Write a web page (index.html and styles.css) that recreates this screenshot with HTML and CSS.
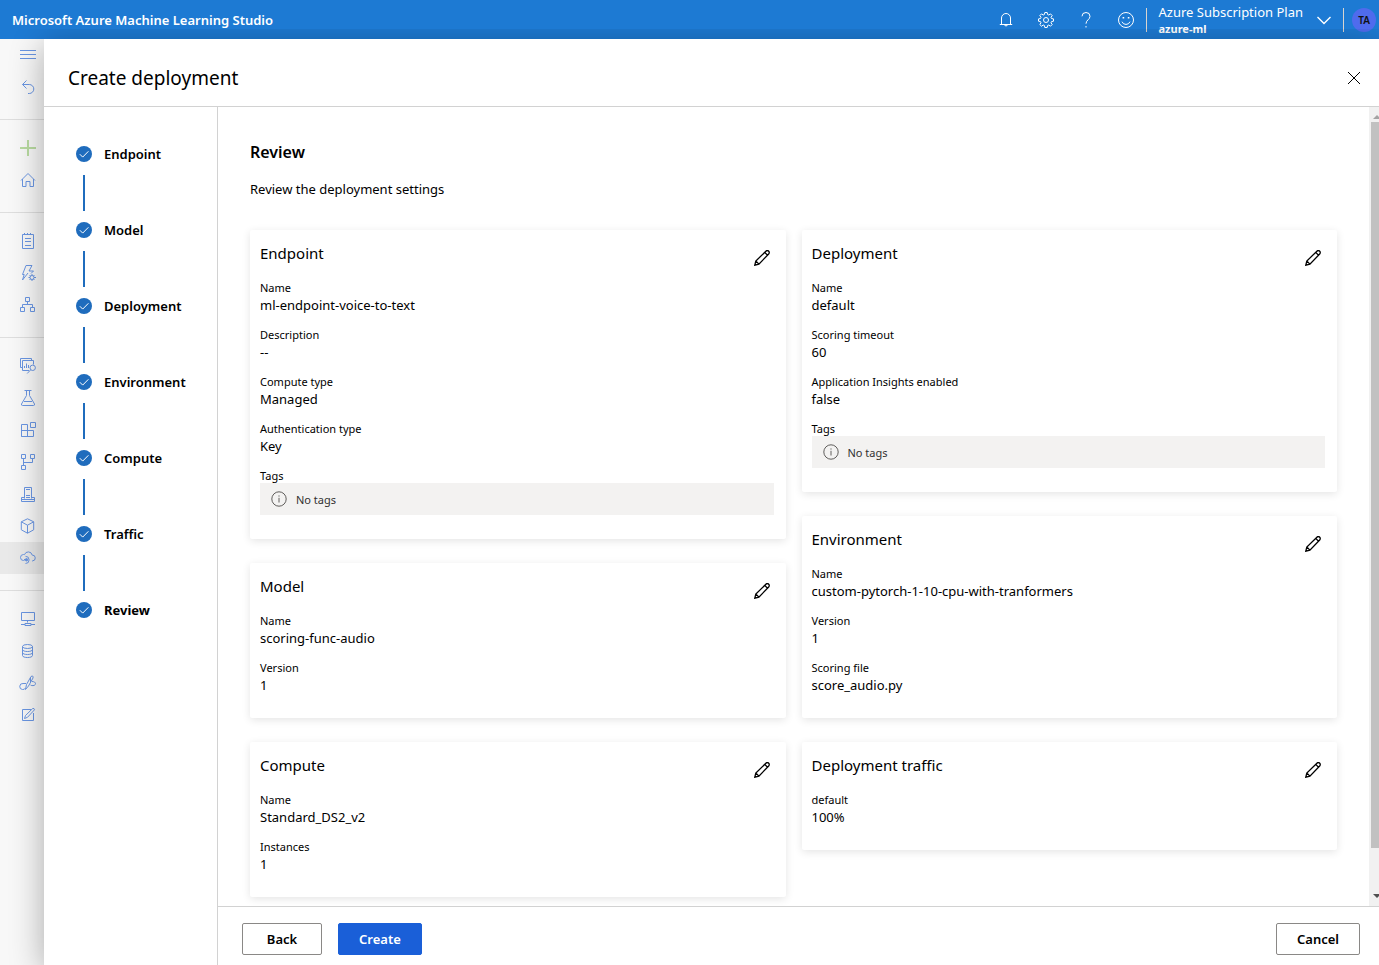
FILE: index.html
```html
<!DOCTYPE html>
<html lang="en">
<head>
    <meta charset="UTF-8">
    <meta name="viewport" content="width=device-width, initial-scale=1.0">
    <title>Create deployment</title>
    <link rel="stylesheet" href="styles.css">
</head>
<body>
    <!-- shared icons -->
    <svg class="sprite" aria-hidden="true">
        <symbol id="pencil" viewBox="0 0 16 16">
            <path d="M.8 15.2l1-4.2L11.9 1.2a1.9 1.9 0 0 1 2.8 2.8L4.900 14.100zM1.800 11l3.100 3.100M10.700 2.400l2.900 2.900"/>
        </symbol>
        <symbol id="info" viewBox="0 0 16 16">
            <circle cx="8" cy="8" r="7.200"/>
            <path d="M8 6.800v4.700M8 4.400v1.200"/>
        </symbol>
        <symbol id="check" viewBox="0 0 16 16">
            <circle cx="8" cy="8" r="8" fill="#1f6cbd"/>
            <path d="M3.800 8.200l2.900 2.900 5.700-5.800" fill="none" stroke="#fff"/>
        </symbol>
    </svg>

    <header class="topbar">
        <span class="brand">Microsoft Azure Machine Learning Studio</span>
        <div class="tools">
            <button class="tool" aria-label="Notifications">
                <svg viewBox="0 0 16 16"><path d="M3.500 12.500V6a4.500 4.500 0 0 1 9 0v6.500M1.800 12.500h12.400M6.300 12.700a1.800 1.800 0 0 0 3.400 0"/></svg>
            </button>
            <button class="tool" aria-label="Settings">
                <svg viewBox="0 0 16 16"><path d="M6.800.500h2.400l.4 2 1.200.5 1.700-1.100 1.700 1.700L13 5.300l.5 1.200 2 .4v2.300l-2 .4-.5 1.200 1.200 1.700-1.700 1.700-1.700-1.200-1.200.5-.4 2H6.800l-.4-2-1.200-.5-1.700 1.200-1.700-1.700L3 10.800l-.5-1.200-2-.4V6.900l2-.4L3 5.300 1.800 3.600l1.700-1.700L5.200 3l1.200-.5z"/><circle cx="8" cy="8" r="2.500"/></svg>
            </button>
            <button class="tool" aria-label="Help">
                <svg viewBox="0 0 16 16"><path d="M4 4.300a4 3.800 0 0 1 8 0c0 3.300-4 3.700-4 7.400M8 14v1.500"/></svg>
            </button>
            <button class="tool" aria-label="Feedback">
                <svg viewBox="0 0 16 16"><circle cx="8" cy="8" r="7.500"/><path d="M4 9.700a4.300 4.300 0 0 0 8 0"/><path d="M5.400 5v1.600M10.600 5v1.600" stroke-width="1.600"/></svg>
            </button>
        </div>
        <button class="account">
            <span class="account-text">
                <span class="plan">Azure Subscription Plan</span>
                <strong class="workspace">azure-ml</strong>
            </span>
            <svg class="chevron" viewBox="0 0 14 14"><path d="M.500 4l6.500 6.500L13.500 4"/></svg>
        </button>
        <button class="avatar">TA</button>
    </header>

    <div class="shell">
        <nav class="rail" aria-label="Studio">
            <button class="rail-item" aria-label="Menu"><svg viewBox="0 0 16 16"><path d="M0 3.500h16M0 7.500h16M0 11.500h16"/></svg></button>
            <a class="rail-item" href="#" aria-label="Back"><svg viewBox="0 0 16 16"><path d="M6.500 1.500l-4 4 4 4M2.500 5.500h6.800a4.500 4.500 0 0 1 0 9H8"/></svg></a>
            <hr>
            <a class="rail-item new" href="#" aria-label="New"><svg viewBox="0 0 16 16"><path d="M0 8h16M8 0v16"/></svg></a>
            <a class="rail-item" href="#" aria-label="Home"><svg viewBox="0 0 16 16"><path d="M1 8.500l7-7 7 7M2.500 7v7.500h3.500v-5h4v5h3.500V7"/></svg></a>
            <hr>
            <a class="rail-item" href="#" aria-label="Notebooks"><svg viewBox="0 0 16 16"><path d="M2.500 1.500h11v14h-11zM4.500 0v1.500M7.500 0v1.500M10.500 0v1.500M5 5.500h6M5 8.500h6M5 12.500h6"/></svg></a>
            <a class="rail-item" href="#" aria-label="Automated ML"><svg viewBox="0 0 16 16"><path d="M8 8L2.500 15l1.700-5.500H2.500L6 .500h6L9 6h4.500L11 8.500"/><circle cx="12" cy="12.500" r="2"/><path d="M12 9v1.500M12 14.500V16M8.500 12.500H10M14 12.500h2M9.500 10l1 1M13.500 14l1 1M14.500 10l-1 1M10.500 14l-1 1"/></svg></a>
            <a class="rail-item" href="#" aria-label="Designer"><svg viewBox="0 0 16 16"><path d="M5.500.500h4v4h-4zM.500 10.500h4v4h-4zM10.500 10.500h4v4h-4zM7.500 4.500v3M2.500 10.500v-3h10v3"/></svg></a>
            <hr>
            <a class="rail-item" href="#" aria-label="Data"><svg viewBox="0 0 16 16"><path d="M2 9.500H.500v-9h11V2M9 12.500H2.500v-10h11v4M4.500 10V8M6.500 10V5.500M8.500 10V7"/><circle cx="12.700" cy="9.800" r="2.700"/><path d="M10.700 11.800L7.200 15.500"/></svg></a>
            <a class="rail-item" href="#" aria-label="Jobs"><svg viewBox="0 0 16 16"><path d="M4.500.500h7M6.500.500v5L1.500 14q-.3 1.500 1 1.500h11q1.300 0 1-1.500l-5-8.500v-5M4 11.500h8"/></svg></a>
            <a class="rail-item" href="#" aria-label="Components"><svg viewBox="0 0 16 16"><path d="M1.500 2.500h6v12h-6zM1.500 8.500h12v6h-12M10.500.500h5v5h-5z"/></svg></a>
            <a class="rail-item" href="#" aria-label="Pipelines"><svg viewBox="0 0 16 16"><path d="M1.500.500h4v4h-4zM10.500.500h4v4h-4zM1.500 11.500h4v4h-4zM3.500 4.500v7M3.500 8.500h9v-4"/></svg></a>
            <a class="rail-item" href="#" aria-label="Environments"><svg viewBox="0 0 16 16"><path d="M4.500 12.500V1.500h7v11M1.500 11.500h3M11.500 11.500h3v4h-13v-4M1.500 13.500h13M6 3.500h4M6 9.500h4M6 11.500h4"/></svg></a>
            <a class="rail-item" href="#" aria-label="Models"><svg viewBox="0 0 16 16"><path d="M7.500.800l6.200 3v8l-6.200 3.400-6.200-3.400v-8zM1.300 3.800L7.500 7.200l6.200-3.400M7.500 7.200v8"/></svg></a>
            <a class="rail-item active" href="#" aria-label="Endpoints"><svg viewBox="0 0 16 16"><path d="M4.500 10.500h-1a3 3 0 0 1 0-6c.3 0 1 .1 1 .1a4 4 0 0 1 7.700.5 2.900 2.900 0 0 1 .3 5.800h-.5M4 9.500h2.500"/><circle cx="6.500" cy="9.800" r="1.200" fill="currentColor"/><path d="M5.500 6.300a3.600 3.600 0 1 1 0 7.200"/></svg></a>
            <hr>
            <a class="rail-item" href="#" aria-label="Compute"><svg viewBox="0 0 16 16"><path d="M1.500 1.500h13v8h-13zM7.500 9.500v2M1 13.500h4M11 13.500h4M5 12.500h6v2H5z"/></svg></a>
            <a class="rail-item" href="#" aria-label="Datastores"><svg viewBox="0 0 16 16"><ellipse cx="7.500" cy="3.500" rx="5" ry="2"/><path d="M2.500 3.500v9c0 2.700 10 2.700 10 0v-9M2.500 6.500c0 2.700 10 2.700 10 0M2.500 9.500c0 2.700 10 2.700 10 0"/></svg></a>
            <a class="rail-item" href="#" aria-label="Linked services"><svg viewBox="0 0 16 16"><path d="M5.500 14.500l1-5 4.500-8q2.500-1.500 2 1.500l-4.500 8zM6 8.500H3a2.800 2.800 0 0 0-.5 6q2 .3 3-1.500M12 6.500c4 0 4.500 3 2 4q-2.500.5-3.500-.5M10.500 3v4"/></svg></a>
            <a class="rail-item" href="#" aria-label="Data labeling"><svg viewBox="0 0 16 16"><path d="M11 2.500H2.500v11h11V6M4.500 11.500l1-3L12.700 1.500q1.700-.5 1.800 1.300L7.500 10.300z"/></svg></a>
        </nav>

        <section class="panel">
            <div class="panel-head">
                <h1>Create deployment</h1>
                <button class="close" aria-label="Close"><svg viewBox="0 0 12 12"><path d="M0 0l12 12M12 0L0 12"/></svg></button>
            </div>

            <div class="panel-body">
                <ol class="steps">
                    <li><svg><use href="#check"/></svg>Endpoint</li>
                    <li><svg><use href="#check"/></svg>Model</li>
                    <li><svg><use href="#check"/></svg>Deployment</li>
                    <li><svg><use href="#check"/></svg>Environment</li>
                    <li><svg><use href="#check"/></svg>Compute</li>
                    <li><svg><use href="#check"/></svg>Traffic</li>
                    <li class="current"><svg><use href="#check"/></svg>Review</li>
                </ol>

                <div class="main">
                    <div class="scroll-area">
                        <div class="review">
                            <h2>Review</h2>
                            <p class="intro">Review the deployment settings</p>

                            <div class="columns">
                                <div class="column">
                                    <article class="card">
                                        <div class="card-head">
                                            <h3>Endpoint</h3>
                                            <button class="edit" aria-label="Edit endpoint"><svg><use href="#pencil"/></svg></button>
                                        </div>
                                        <dl>
                                            <div><dt>Name</dt><dd>ml-endpoint-voice-to-text</dd></div>
                                            <div><dt>Description</dt><dd>--</dd></div>
                                            <div><dt>Compute type</dt><dd>Managed</dd></div>
                                            <div><dt>Authentication type</dt><dd>Key</dd></div>
                                            <div><dt>Tags</dt><dd class="no-tags"><svg><use href="#info"/></svg>No tags</dd></div>
                                        </dl>
                                    </article>
                                    <article class="card">
                                        <div class="card-head">
                                            <h3>Model</h3>
                                            <button class="edit" aria-label="Edit model"><svg><use href="#pencil"/></svg></button>
                                        </div>
                                        <dl>
                                            <div><dt>Name</dt><dd>scoring-func-audio</dd></div>
                                            <div><dt>Version</dt><dd>1</dd></div>
                                        </dl>
                                    </article>
                                    <article class="card">
                                        <div class="card-head">
                                            <h3>Compute</h3>
                                            <button class="edit" aria-label="Edit compute"><svg><use href="#pencil"/></svg></button>
                                        </div>
                                        <dl>
                                            <div><dt>Name</dt><dd>Standard_DS2_v2</dd></div>
                                            <div><dt>Instances</dt><dd>1</dd></div>
                                        </dl>
                                    </article>
                                </div>

                                <div class="column">
                                    <article class="card">
                                        <div class="card-head">
                                            <h3>Deployment</h3>
                                            <button class="edit" aria-label="Edit deployment"><svg><use href="#pencil"/></svg></button>
                                        </div>
                                        <dl>
                                            <div><dt>Name</dt><dd>default</dd></div>
                                            <div><dt>Scoring timeout</dt><dd>60</dd></div>
                                            <div><dt>Application Insights enabled</dt><dd>false</dd></div>
                                            <div><dt>Tags</dt><dd class="no-tags"><svg><use href="#info"/></svg>No tags</dd></div>
                                        </dl>
                                    </article>
                                    <article class="card">
                                        <div class="card-head">
                                            <h3>Environment</h3>
                                            <button class="edit" aria-label="Edit environment"><svg><use href="#pencil"/></svg></button>
                                        </div>
                                        <dl>
                                            <div><dt>Name</dt><dd>custom-pytorch-1-10-cpu-with-tranformers</dd></div>
                                            <div><dt>Version</dt><dd>1</dd></div>
                                            <div><dt>Scoring file</dt><dd>score_audio.py</dd></div>
                                        </dl>
                                    </article>
                                    <article class="card">
                                        <div class="card-head">
                                            <h3>Deployment traffic</h3>
                                            <button class="edit" aria-label="Edit traffic"><svg><use href="#pencil"/></svg></button>
                                        </div>
                                        <dl>
                                            <div><dt>default</dt><dd>100%</dd></div>
                                        </dl>
                                    </article>
                                </div>
                            </div>
                        </div>
                        <div class="scrollbar" aria-hidden="true">
                            <span class="arrow up"></span>
                            <span class="thumb"></span>
                            <span class="arrow down"></span>
                        </div>
                    </div>

                    <div class="actions">
                        <button class="btn">Back</button>
                        <button class="btn primary">Create</button>
                        <button class="btn cancel">Cancel</button>
                    </div>
                </div>
            </div>
        </section>
    </div>
</body>
</html>
```
FILE: styles.css
```css
*, *::before, *::after {
    box-sizing: border-box;
}

body {
    display: flex;
    flex-direction: column;
    height: 100vh;
    margin: 0;
    overflow: hidden;
    background: #fff;
    color: #000;
    font: 13px/18px "Noto Sans", "Open Sans", sans-serif;
}

h1, h2, h3, p, ol, dl, dd {
    margin: 0;
    padding: 0;
}

button {
    padding: 0;
    border: 0;
    background: none;
    color: inherit;
    font: inherit;
    cursor: pointer;
}

svg {
    display: block;
    flex: none;
    width: 16px;
    height: 16px;
    fill: none;
    stroke: currentColor;
    overflow: visible;
}

.sprite {
    position: absolute;
    width: 0;
    height: 0;
}

/* top bar */
.topbar {
    display: flex;
    align-items: center;
    flex: none;
    height: 39px;
    padding: 0 3px 0 12px;
    background: #1d7ad3;
    color: #fff;
}

.brand {
    flex: 1;
    font-weight: 600;
    line-height: 20px;
}

.tools {
    display: flex;
    gap: 8px;
    padding-right: 4px;
}

.tool {
    display: grid;
    place-items: center;
    width: 32px;
    height: 32px;
}

.account {
    display: flex;
    align-items: center;
    gap: 14px;
    height: 24px;
    padding: 0 12px;
    border: solid #d8d4cf;
    border-width: 0 1px;
    text-align: left;
}

.account-text {
    display: flex;
    flex-direction: column;
}

.plan {
    font-size: 13px;
    line-height: 18px;
}

.workspace {
    font-size: 11px;
    line-height: 16px;
}

.chevron {
    width: 14px;
    height: 14px;
    stroke-width: 1.4;
}

.avatar {
    width: 24px;
    height: 24px;
    margin-left: 8px;
    border-radius: 50%;
    background: #4f6bed;
    color: #111;
    font-size: 10px;
    font-weight: 600;
}

/* left rail */
.shell {
    display: flex;
    flex: 1;
    min-height: 0;
}

.rail {
    flex: none;
    width: 44px;
    background: #f8f8f8;
    color: #6a96e3;
}

.rail-item {
    display: flex;
    align-items: center;
    width: 100%;
    height: 32px;
    padding-left: 20px;
    color: inherit;
}

.rail-item.new {
    color: #b9dba1;
    stroke-width: 2;
}

.rail-item.active {
    background: #e9e9e9;
}

.rail hr {
    height: 1px;
    margin: 16px 0 12px;
    border: 0;
    background: #dedede;
}

/* panel */
.panel {
    position: relative;
    display: flex;
    flex: 1;
    flex-direction: column;
    min-width: 0;
    background: #fff;
    box-shadow: 0 6px 32px rgba(0, 0, 0, .32);
    clip-path: inset(-10px 0 0 -44px);
}

.panel-head {
    display: flex;
    align-items: center;
    justify-content: space-between;
    height: 68px;
    padding: 11px 19px 0 24px;
    border-bottom: 1px solid #d2d2d2;
}

h1 {
    font-size: 19px;
    font-weight: 400;
    line-height: 26px;
}

.close svg {
    width: 12px;
    height: 12px;
}

.panel-body {
    display: flex;
    flex: 1;
    min-height: 0;
}

.steps {
    flex: none;
    width: 174px;
    padding: 38px 0 0 32px;
    border-right: 1px solid #d2d2d2;
    font-weight: 600;
    list-style: none;
}

.steps li {
    display: grid;
    grid-template-columns: 16px 1fr;
    align-items: center;
    column-gap: 12px;
    line-height: 18px;
}

.steps svg {
    stroke: none;
}

.steps li:not(:last-child)::after {
    content: "";
    width: 2px;
    height: 36px;
    margin: 12px 7px 10px;
    background: #1f6cbd;
}

.steps .current {
    font-weight: 700;
}

.main {
    display: flex;
    flex: 1;
    flex-direction: column;
    min-width: 0;
}

.scroll-area {
    display: flex;
    flex: 1;
    min-height: 0;
    overflow: hidden;
}

.review {
    flex: 1;
    min-width: 0;
    padding: 33px 32px 0;
}

h2 {
    font-size: 16px;
    font-weight: 600;
    line-height: 24px;
}

.intro {
    margin: 16px 0 32px;
}

.columns {
    display: flex;
    gap: 16px;
}

.column {
    display: flex;
    flex: 1;
    flex-direction: column;
    gap: 24px;
    min-width: 0;
}

.card {
    padding: 12px 12px 24px 10px;
    border-radius: 2px;
    background: #fff;
    box-shadow: 0 2px 8px rgba(0, 0, 0, .11);
}

.card-head {
    display: flex;
    justify-content: space-between;
    margin-bottom: 6px;
}

h3 {
    font-size: 15px;
    font-weight: 400;
    line-height: 22px;
}

.edit {
    display: grid;
    place-items: center;
    width: 24px;
    height: 32px;
}

.edit svg {
    stroke-width: 1.3;
}

dl {
    display: flex;
    flex-direction: column;
    gap: 13px;
}

dt {
    font-size: 11px;
    line-height: 15px;
}

dd {
    padding-top: 2px;
    line-height: 17px;
}

.no-tags {
    display: flex;
    align-items: center;
    gap: 9px;
    height: 32px;
    padding: 0 11px;
    background: #f3f2f1;
    color: #323130;
    font-size: 11px;
}

.no-tags svg {
    color: #605e5c;
}

.scrollbar {
    display: flex;
    flex: none;
    flex-direction: column;
    width: 10px;
    padding-left: 2px;
    overflow: hidden;
    background: #f1f1f1;
}

.thumb {
    flex: 1;
    margin: 3px 0 46px;
    background: #c1c1c1;
}

.arrow {
    flex: none;
    width: 0;
    height: 12px;
    margin-left: 2px;
    border: 4px solid transparent;
}

.up {
    border-top-width: 0;
    border-bottom-color: #a3a3a3;
}

.down {
    border-top-color: #505050;
}

.actions {
    display: flex;
    flex: none;
    gap: 16px;
    padding: 16px 19px 10px 24px;
    border-top: 1px solid #d2d2d2;
}

.btn {
    min-width: 80px;
    height: 32px;
    padding: 0 20px;
    border: 1px solid #8a8886;
    border-radius: 2px;
    background: #fff;
    font-weight: 600;
}

.primary {
    border-color: #1a5fd8;
    background: #1a5fd8;
    color: #fff;
}

.cancel {
    margin-left: auto;
}
```
